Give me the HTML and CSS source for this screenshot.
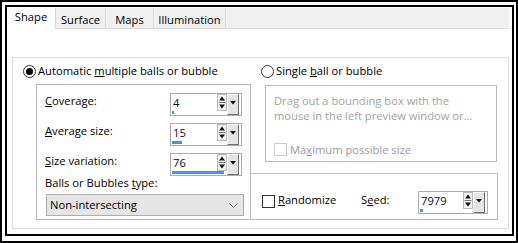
FILE: index.html
```html
<!DOCTYPE html>
<html lang="en">
<head>
    <meta charset="UTF-8">
    <title>Balls and Bubbles</title>
    <link rel="stylesheet" href="styles.css">
</head>
<body>
<div class="frame">
    <div class="dialog">
        <div class="tabs">
            <div class="tab-active">Shape</div>
            <div class="tab-strip">
                <div class="tab tab-surface">Surface</div>
                <div class="tab tab-maps">Maps</div>
                <div class="tab tab-illum">Illumination</div>
            </div>
        </div>

        <div class="page">
            <div class="group">
                <!-- left: automatic -->
                <div class="col">
                    <div class="radio-row radio-left"><span class="radio radio-on"></span><span>Automatic <u>m</u>ultiple balls or bubble</span></div>
                    <div class="box box-auto">
                        <div class="fields">
                            <span class="field-label"><u>C</u>overage:</span>
                            <div class="spin">
                                <div class="spin-main">
                                    <div class="spin-row"><span class="spin-val">4</span>
                                        <svg class="spin-arrows" width="10" height="17" viewBox="0 0 10 17"><rect x="0.5" y="0.5" width="9" height="16" fill="#f3f3f3" stroke="#b9b9b9"/><path d="M5 2.5 L8 6.5 H2Z" fill="#111"/><line x1="1.5" y1="8.5" x2="8.5" y2="8.5" stroke="#777"/><path d="M2 10.5 H8 L5 14.5Z" fill="#111"/></svg>
                                    </div>
                                    <div class="spin-track"><div class="spin-fill" style="width:2px"></div></div>
                                </div>
                                <div class="spin-drop"><svg width="6" height="4" viewBox="0 0 6 4"><path d="M0 0 H6 L3 3.5Z" fill="#111"/></svg></div>
                            </div>

                            <span class="field-label"><u>A</u>verage size:</span>
                            <div class="spin">
                                <div class="spin-main">
                                    <div class="spin-row"><span class="spin-val">15</span>
                                        <svg class="spin-arrows" width="10" height="17" viewBox="0 0 10 17"><rect x="0.5" y="0.5" width="9" height="16" fill="#f3f3f3" stroke="#b9b9b9"/><path d="M5 2.5 L8 6.5 H2Z" fill="#111"/><line x1="1.5" y1="8.5" x2="8.5" y2="8.5" stroke="#777"/><path d="M2 10.5 H8 L5 14.5Z" fill="#111"/></svg>
                                    </div>
                                    <div class="spin-track"><div class="spin-fill" style="width:10px"></div></div>
                                </div>
                                <div class="spin-drop"><svg width="6" height="4" viewBox="0 0 6 4"><path d="M0 0 H6 L3 3.5Z" fill="#111"/></svg></div>
                            </div>

                            <span class="field-label"><u>S</u>ize variation:</span>
                            <div class="spin">
                                <div class="spin-main">
                                    <div class="spin-row"><span class="spin-val">76</span>
                                        <svg class="spin-arrows" width="10" height="17" viewBox="0 0 10 17"><rect x="0.5" y="0.5" width="9" height="16" fill="#f3f3f3" stroke="#b9b9b9"/><path d="M5 2.5 L8 6.5 H2Z" fill="#111"/><line x1="1.5" y1="8.5" x2="8.5" y2="8.5" stroke="#777"/><path d="M2 10.5 H8 L5 14.5Z" fill="#111"/></svg>
                                    </div>
                                    <div class="spin-track"><div class="spin-fill" style="width:52px"></div></div>
                                </div>
                                <div class="spin-drop"><svg width="6" height="4" viewBox="0 0 6 4"><path d="M0 0 H6 L3 3.5Z" fill="#111"/></svg></div>
                            </div>
                        </div>
                        <div class="type-label">Balls or Bubbles <u>t</u>ype:</div>
                        <div class="select"><span>Non-intersecting</span>
                            <svg class="chevron" width="9" height="5" viewBox="0 0 9 5"><path d="M0.5 0.5 L4.5 4.5 L8.5 0.5" fill="none" stroke="#666"/></svg>
                        </div>
                    </div>
                </div>

                <!-- right: single -->
                <div class="col">
                    <div class="radio-row radio-right"><span class="radio"></span><span>Single <u>b</u>all or bubble</span></div>
                    <div class="box box-single">
                        <p class="hint">Drag out a bounding box with the<br>mouse in the left preview window or...</p>
                        <div class="check-row">
                            <span class="check check-off"></span><span>Ma<u>x</u>imum possible size</span>
                        </div>
                    </div>
                    <div class="box box-seed">
                        <div class="rand"><span class="check"></span><span class="rand-label"><u>R</u>andomize</span></div>
                        <span class="seed-label">S<u>e</u>ed:</span>
                        <div class="spin spin-seed">
                            <div class="spin-main">
                                <div class="spin-row"><span class="spin-val">7979</span>
                                    <svg class="spin-arrows" width="10" height="17" viewBox="0 0 10 17"><rect x="0.5" y="0.5" width="9" height="16" fill="#f3f3f3" stroke="#b9b9b9"/><path d="M5 2.5 L8 6.5 H2Z" fill="#111"/><line x1="1.5" y1="8.5" x2="8.5" y2="8.5" stroke="#777"/><path d="M2 10.5 H8 L5 14.5Z" fill="#111"/></svg>
                                </div>
                                <div class="spin-track"><div class="spin-fill" style="width:3px"></div></div>
                            </div>
                            <div class="spin-drop"><svg width="6" height="4" viewBox="0 0 6 4"><path d="M0 0 H6 L3 3.5Z" fill="#111"/></svg></div>
                        </div>
                    </div>
                </div>
            </div>
        </div>
    </div>
</div>
</body>
</html>
```

FILE: styles.css
```css
html,body,div,p{margin: 0; padding: 0;}
body{background: #fff; font-family: "Open Sans", "Noto Sans", sans-serif; font-size: 11.2px; color: #000;}
u{text-decoration: underline; text-underline-offset: 1px;}

.frame{width: 518px; height: 243px; box-sizing: border-box; border: 2px solid #000;}
.dialog{
    margin: 3px 2px 5px 3px;
    height: 231px;
    box-sizing: border-box;
    border: 2px solid #000;
    display: flex;
    flex-direction: column;
}

/* tab header */
.tabs{display: flex; height: 22px;}
.tab-active{width: 48px; padding-top: 1px; line-height: 18px; text-align: center; background: #fff;}
.tab-strip{
    flex: 1;
    display: flex;
    margin: 1px 3px 0 0;
    box-sizing: border-box;
    background: #f0f0f0;
    border-left: 1px solid #d9d9d9;
    border-bottom: 1px solid #d9d9d9;
}
.tab{padding-top: 3px; line-height: 17px; text-align: center; border-right: 1px solid #d9d9d9; box-sizing: border-box;}
.tab-surface{width: 50px;}
.tab-maps{width: 48px;}
.tab-illum{width: 72px;}

/* page */
.page{flex: 1; padding: 28px 0 0 5px;}
.group{
    width: 497px;
    height: 172px;
    box-sizing: border-box;
    border: 1px solid #dcdcdc;
    padding-top: 6px;
    display: grid;
    grid-template-columns: 238px 1fr;
}
.col{display: flex; flex-direction: column; align-items: flex-start;}

.radio-row{display: flex; align-items: center; gap: 2px; height: 14px; line-height: 14px; white-space: nowrap;}
.radio-left{margin-left: 10px;}
.radio-right{margin-left: 10px;}
.radio{
    width: 13px; height: 13px; box-sizing: border-box;
    border: 1px solid #333; border-radius: 50%; background: #fff;
    display: flex; align-items: center; justify-content: center;
}
.radio-on::after{content: ""; width: 7px; height: 7px; border-radius: 50%; background: #000;}

.box{box-sizing: border-box; border: 1px solid #bcbcbc;}
.box-auto{margin: 6px 0 0 23px; width: 215px; height: 136px; padding: 8px 0 0 8px;}
.box-single{margin: 7px 0 0 14px; width: 232px; height: 77px; padding: 7px 0 0 8px; color: #a3a3a3;}
.box-seed{
    margin: 11px 0 0 -1px; width: 248px; height: 47px;
    padding: 17px 0 0 11px;
    display: flex; align-items: flex-start;
}

.fields{display: grid; grid-template-columns: 125px 72px; row-gap: 7px; align-items: start;}
.field-label{line-height: 15px; white-space: nowrap;}

/* spin box */
.spin{
    display: flex; width: 72px; height: 23px; box-sizing: border-box;
    border: 1px solid #acacac; background: #fff;
}
.spin-main{flex: 1; display: flex; flex-direction: column; padding: 0 0 1px 1px;}
.spin-row{display: flex; height: 17px;}
.spin-val{flex: 1; padding-left: 1px; line-height: 17px; color: #0a0a30;}
.spin-track{height: 3px;}
.spin-fill{height: 3px; background: #3c95f0;}
.spin-drop{
    width: 12px; margin-right: 2px; box-sizing: border-box;
    background: #e4e4e4;
    border-top: 1px solid #fff; border-left: 1px solid #fff;
    border-right: 1px solid #6e6e6e; border-bottom: 1px solid #6e6e6e;
    display: flex; justify-content: center; padding-top: 6px;
}
.spin-seed{width: 70px;}

.type-label{margin-top: -1px; line-height: 15px;}
.select{
    margin: 4px 0 0 1px; width: 198px; height: 22px; box-sizing: border-box;
    background: #e5e5e5; border: 1px solid #adadad;
    padding-left: 3px; line-height: 20px;
    display: flex; justify-content: space-between; align-items: center;
}
.chevron{margin-right: 5px;}

.hint{line-height: 15px; white-space: nowrap;}
.check-row{margin-top: 20px; display: flex; align-items: center; gap: 3px; height: 13px; line-height: 13px; color: #9a9aa2;}
.check{width: 13px; height: 13px; box-sizing: border-box; border: 1px solid #333; background: #fff;}
.check-off{border-color: #cccccc;}

.rand{width: 99px; display: flex; align-items: flex-start; gap: 3px;}
.rand .check{margin-top: 4px;}
.rand-label{margin-top: 1px; line-height: 15px;}
.seed-label{width: 57px; margin-top: 1px; line-height: 15px;}
```
